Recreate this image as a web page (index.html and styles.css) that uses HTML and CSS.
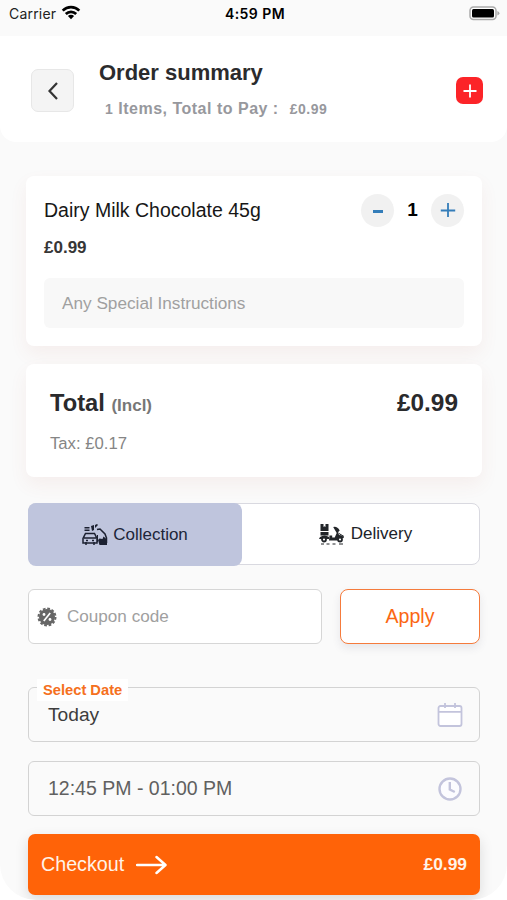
FILE: index.html
```html
<!DOCTYPE html>
<html lang="en">
<head>
<meta charset="utf-8">
<title>Order summary</title>
<link rel="stylesheet" href="styles.css">
</head>
<body>
<div class="app">
  <div class="status">
    <div class="carrier"><span>Carrier</span>
      <svg width="20" height="15" viewBox="0 0 20 15"><g fill="none" stroke="#000" stroke-width="2.7"><path d="M1.7 5.6a11.8 11.8 0 0 1 16.6 0"/><path d="M4.8 9a7.4 7.4 0 0 1 10.4 0"/></g><path d="M6.9 11a4.4 4.4 0 0 1 6.2 0L10 14.2z"/></svg>
    </div>
    <div class="clock">4:59 PM</div>
    <svg class="battery" width="32" height="15" viewBox="0 0 32 15"><rect x="1" y="1" width="26" height="12.5" rx="3.5" fill="#fff" stroke="#aaa" stroke-width="1.5"/><rect x="3" y="3" width="22" height="8.5" rx="1.5"/><path d="M28.4 5q2 .8 2 2.3t-2 2.300z" fill="#aaa"/></svg>
  </div>
  <header class="header">
    <div class="back"><svg width="12" height="20" viewBox="0 0 12 20"><path d="M10 2 2.500 10 10 18" fill="none" stroke="#333" stroke-width="2.2"/></svg></div>
    <div class="heading">
      <h1>Order summary</h1>
      <p><span class="count">1</span> Items, Total to Pay :<span class="pay">£0.99</span></p>
    </div>
    <div class="add"><svg width="14" height="14" viewBox="0 0 14 14"><path d="M7 .5v13M.5 7h13" stroke="#fff" stroke-width="1.8"/></svg></div>
  </header>
  <main>
    <section class="card item">
      <div class="row">
        <div class="name">Dairy Milk Chocolate 45g</div>
        <div class="stepper">
          <div class="round"><svg width="14" height="14" viewBox="0 0 14 14"><path d="M2 8.500h10" stroke="#347db9" stroke-width="3"/></svg></div>
          <b>1</b>
          <div class="round"><svg width="16" height="16" viewBox="0 0 16 16"><path d="M8 1v14M.8 8.500h14.400" stroke="#347db9" stroke-width="1.800"/></svg></div>
        </div>
      </div>
      <div class="price">£0.99</div>
      <div class="notes">Any Special Instructions</div>
    </section>
    <section class="card total">
      <div class="row"><div class="sum">Total <span>(Incl)</span></div><div class="amount">£0.99</div></div>
      <div class="tax">Tax: £0.17</div>
    </section>
    <div class="tabs">
      <div class="tab active">
        <svg width="26" height="22" viewBox="0 0 26 22"><g fill="none" stroke="#1c2131" stroke-width="1.500"><path d="M1 19v-4.500l2.500-5h9l2.500 5V19zM2 14h12M4 16.500h2M10 16.500h2M4 18v3M12 18v3"/><path d="M15 5.500 18 5l5 5 1.500 4v5"/></g><path d="M2.500 3h5v1.500h-5zM2.500 5.500h5V7h-5zM9 2l3-1v5l-2 1zM13 1l2-1 1 1-3 3z" fill="#1c2131"/><path d="M16 16l1.500-1.500 3 .5 1-2.500 3.500 3V21h-7.500z" fill="#1c2131"/><path d="M15.500 11v7" stroke="#1c2131"/></svg>
        <span>Collection</span>
      </div>
      <div class="tab delivery">
        <svg width="26" height="21" viewBox="0 0 26 21"><g fill="#222529"><path d="M1.500 0h3v3l1-.7 1 .7V0h3v7h-8zM1.500 8h8v3.500h-8zM1 13q4.500-2.500 9 0v2H0zM10.500 11.500h2.700v2h2.500l2-4.500-3.500-6q4-1 6.500 3.500l-1.500 1.500L20 11q4 0 5 3l-5 .5-1.500 2H10z"/><path d="M20 9.500l5 3" stroke="#222529"/></g><g fill="#fff" stroke="#222529" stroke-width="1.800"><circle cx="5" cy="15.500" r="2"/><circle cx="21" cy="15.500" r="2"/></g><path d="M2 20h3M7.500 20h3M13.500 20h3M20 20h4" stroke="#222529" stroke-width="1.100"/></svg>
        <span>Delivery</span>
      </div>
    </div>
    <div class="coupon">
      <div class="code">
        <svg width="20" height="20" viewBox="0 0 20 20"><circle cx="10" cy="10" r="8" fill="#666"/><circle cx="10" cy="10" r="8.500" fill="none" stroke="#666" stroke-width="2" stroke-dasharray="2.700 1.750"/><path d="M6.800 14 13.200 6" stroke="#fff" stroke-width="1.700"/><circle cx="7" cy="7.500" r="1.400" fill="#fff"/><circle cx="13" cy="12.500" r="1.400" fill="#fff"/></svg>
        <span>Coupon code</span>
      </div>
      <div class="apply">Apply</div>
    </div>
    <div class="field date">
      <span class="legend">Select Date</span>
      <span>Today</span>
      <svg width="26" height="26" viewBox="0 0 26 26"><rect x="1.500" y="4" width="23" height="20" rx="2" fill="#fff" stroke="#c3c4dc" stroke-width="1.800"/><path d="M1.500 9.800h23M8 1v5M18 1v5" stroke="#c3c4dc" stroke-width="1.800"/></svg>
    </div>
    <div class="field time">
      <span>12:45 PM - 01:00 PM</span>
      <svg width="26" height="26" viewBox="0 0 26 26"><circle cx="13" cy="13" r="10.500" fill="#fcfcff" stroke="#c3c4dc" stroke-width="2.400"/><path d="M12.800 6v7.500l5 2.500" fill="none" stroke="#c3c4dc" stroke-width="2.400"/></svg>
    </div>
    <div class="checkout">
      <span>Checkout</span>
      <svg width="31" height="20" viewBox="0 0 31 20"><path d="M1 10h28M20.500 2l9 8-9 8" fill="none" stroke="#fff" stroke-width="2.500" stroke-linecap="round" stroke-linejoin="round"/></svg>
      <b>£0.99</b>
    </div>
  </main>
</div>
</body>
</html>
```
FILE: styles.css
```css
* { box-sizing: border-box; }
body { margin: 0; background: #fff; font-family: "Liberation Sans", Arial, sans-serif; }
h1, p { margin: 0; }
svg { display: block; flex: none; }
.app { height: 900px; overflow: hidden; background: #fafafa; border-radius: 0 0 36px 36px; }
.status { height: 36px; padding: 5px 6px 0 9px; display: grid; grid-template-columns: 1fr auto 1fr; align-items: start; font: 14px/18px Inter, sans-serif; }
.carrier { display: flex; gap: 5px; color: #222; letter-spacing: .2px; }
.clock { font-weight: 600; letter-spacing: .45px; }
.battery { justify-self: end; margin-top: 1px; }
.header { height: 106px; padding: 0 24px 0 31px; background: #fff; border-radius: 0 0 16px 16px; display: flex; align-items: flex-start; }
.back { width: 43px; height: 43px; margin-top: 33px; border: 1px solid #e7e7e7; border-radius: 7px; background: #f4f4f4; display: grid; place-items: center; }
.heading { flex: 1; margin: 24px 0 0 25px; }
h1 { font-size: 22px; line-height: 26px; color: #2b2b2d; }
.heading p { margin: 13px 0 0 6px; font-size: 16px; line-height: 20px; font-weight: bold; letter-spacing: .5px; color: #97989d; }
.count, .pay { font-size: 14px; }
.pay { margin-left: 11px; }
.add { width: 27px; height: 27px; margin-top: 41px; border-radius: 7px; background: #fc2428; display: grid; place-items: center; }
main { padding: 34px 27px 0 28px; }
.card { margin: 0 -2px; background: #fff; border-radius: 8px; box-shadow: 0 8px 18px rgba(190, 90, 70, .07); }
.row { display: flex; justify-content: space-between; }
.item { height: 170px; padding: 17px 18px 0; }
.item .row { height: 34px; align-items: center; }
.name { font-size: 19.5px; color: #171717; white-space: nowrap; }
.stepper { display: flex; align-items: center; gap: 13px; font-size: 19px; }
.stepper b { width: 11px; text-align: center; }
.round { width: 33px; height: 33px; border-radius: 50%; background: #f1f1f1; display: grid; place-items: center; }
.price { margin-top: 11px; font-size: 17px; line-height: 20px; font-weight: bold; color: #363636; }
.notes { height: 50px; margin-top: 20px; padding-left: 18px; border-radius: 6px; background: #f8f8f8; font-size: 17.2px; line-height: 50px; color: #a0a0a0; }
.total { height: 113px; margin-top: 18px; padding: 24px 24px 0; color: #2a2a2c; }
.sum { font-size: 23.7px; line-height: 30px; font-weight: bold; }
.sum span { font-size: 17px; color: #777; }
.amount { font-size: 24.4px; line-height: 30px; font-weight: bold; }
.tax { margin-top: 13px; font-size: 16.7px; line-height: 20px; color: #858585; }
.tabs { height: 62px; margin-top: 26px; border: 1px solid #d9d9e0; border-radius: 8px; background: #fff; display: flex; font-size: 17px; color: #202329; }
.tab { display: flex; align-items: center; justify-content: center; gap: 5px; }
.active { width: 214px; height: 63px; margin: -1px 0 0 -1px; border-radius: 8px; background: #bfc5dd; color: #202639; }
.delivery { flex: 1; padding-left: 10px; gap: 6px; }
.coupon { height: 55px; margin-top: 24px; display: flex; gap: 18px; }
.code { flex: 1; padding-left: 8px; border: 1px solid #d6d6d6; border-radius: 6px; background: #fff; display: flex; align-items: center; gap: 10px; font-size: 17.1px; color: #a0a0a0; }
.apply { width: 140px; border: 1.5px solid #f57b3c; border-radius: 8px; background: #fff; box-shadow: 0 4px 8px rgba(60, 60, 90, .1); display: grid; place-items: center; font-size: 19.5px; color: #fb6713; }
.field { position: relative; height: 55px; padding: 0 16px 0 19px; border: 1px solid #d3d3d3; border-radius: 6px; display: flex; align-items: center; justify-content: space-between; font-size: 19.5px; color: #606060; }
.date { margin-top: 43px; color: #3d3d3d; font-size: 19.2px; }
.time { margin-top: 19px; }
.legend { position: absolute; left: 8px; top: -9px; padding: 0 6px; background: #fff; font-size: 14.7px; line-height: 22px; font-weight: bold; color: #f57020; }
.checkout { height: 61px; margin-top: 18px; padding: 0 13px; border-radius: 7px; background: #ff6308; box-shadow: 0 5px 14px rgba(0, 0, 0, .13); color: #fff3e8; display: flex; align-items: center; gap: 12px; font-size: 19.7px; }
.checkout b { margin-left: auto; font-size: 17.4px; }
```
